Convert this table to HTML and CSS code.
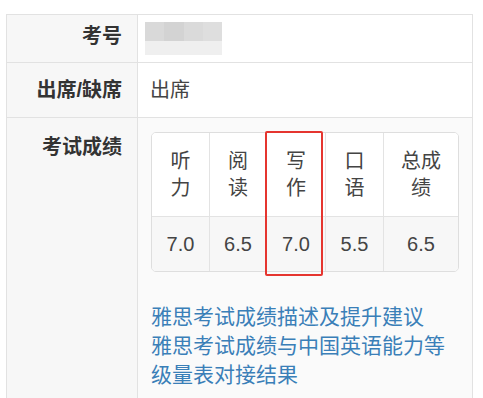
FILE: index.html
```html
<!DOCTYPE html>
<html lang="zh">
<head>
<meta charset="utf-8">
<link rel="stylesheet" href="styles.css">
</head>
<body>
<div class="info">
  <div class="row row-id">
    <div class="label">考号</div>
    <div class="value">
      <div class="blur">
        <div class="blur-top"><span></span><span></span><span></span><span></span></div>
        <div class="blur-bottom"></div>
      </div>
    </div>
  </div>
  <div class="row row-att">
    <div class="label">出席/缺席</div>
    <div class="value">出席</div>
  </div>
  <div class="row row-score">
    <div class="label">考试成绩</div>
    <div class="value">
      <div class="scores">
        <div class="grid">
          <div class="cell head">听<br>力</div>
          <div class="cell head">阅<br>读</div>
          <div class="cell head">写<br>作</div>
          <div class="cell head">口<br>语</div>
          <div class="cell head last">总成<br>绩</div>
          <div class="cell data">7.0</div>
          <div class="cell data">6.5</div>
          <div class="cell data">7.0</div>
          <div class="cell data">5.5</div>
          <div class="cell data last">6.5</div>
        </div>
        <div class="mark"></div>
      </div>
      <div class="links">
        <a class="link" href="#">雅思考试成绩描述及提升建议</a>
        <a class="link" href="#">雅思考试成绩与中国英语能力等级量表对接结果</a>
      </div>
    </div>
  </div>
</div>
</body>
</html>
```
FILE: styles.css
```css
* { box-sizing: border-box; }
html, body { margin: 0; padding: 0; background: #ffffff; }
body {
  font-family: "Liberation Sans", "Noto Sans CJK SC", sans-serif;
  font-size: 20px;
  color: #444;
  padding-top: 14px;
  padding-left: 6px;
}
.info {
  width: 467px;
  border: 1px solid #e2e2e2;
  border-bottom: none;
}
.row {
  display: grid;
  grid-template-columns: 131px 1fr;
  border-bottom: 1px solid #e2e2e2;
}
.label {
  background: #f7f7f7;
  border-right: 1px solid #e2e2e2;
  text-align: right;
  padding-right: 15px;
  font-weight: bold;
  color: #333;
  line-height: 27px;
}
.value {
  padding-left: 12px;
  line-height: 27px;
  color: #444;
}
.row-id { height: 48px; }
.row-id .label { padding-top: 8px; }
.row-id .value { padding-left: 7px; padding-top: 7px; }
.blur { width: 77px; }
.blur-top { display: flex; height: 19px; }
.blur-top span { flex: 1; background: #d9d9d9; }
.blur-top span:nth-child(2) { background: #d3d3d3; }
.blur-top span:nth-child(3) { background: #dadada; }
.blur-top span:nth-child(4) { background: #dedede; }
.blur-bottom { height: 14px; background: #efefef; }
.row-att { height: 55px; }
.row-att .label, .row-att .value { padding-top: 14px; }
.row-att .value { background: #fff; }
.row-score .label { padding-top: 16px; }
.row-score .value {
  background: #fafafa;
  padding: 14px 13px 12px 13px;
}
.scores { position: relative; }
.grid {
  display: grid;
  grid-template-columns: 58px 57px 59px 58px 1fr;
  border: 1px solid #dedede;
  border-radius: 5px;
  overflow: hidden;
  background: #fff;
}
.cell {
  text-align: center;
  border-right: 1px solid #e3e3e3;
  line-height: 27px;
  color: #444;
}
.cell.last { border-right: none; }
.head { padding: 15px 0 14px; border-bottom: 1px solid #e3e3e3; background: #fff; }
.data { padding: 14px 0 13px; background: #f7f7f7; }
.mark {
  position: absolute;
  left: 114px;
  top: -1px;
  width: 58px;
  height: 145px;
  border: 2px solid #e5352f;
  border-radius: 2px;
}
.links { margin-top: 30px; }
.link {
  display: block;
  color: #3a7fb8;
  text-decoration: none;
  font-size: 21px;
  line-height: 29px;
}
```
